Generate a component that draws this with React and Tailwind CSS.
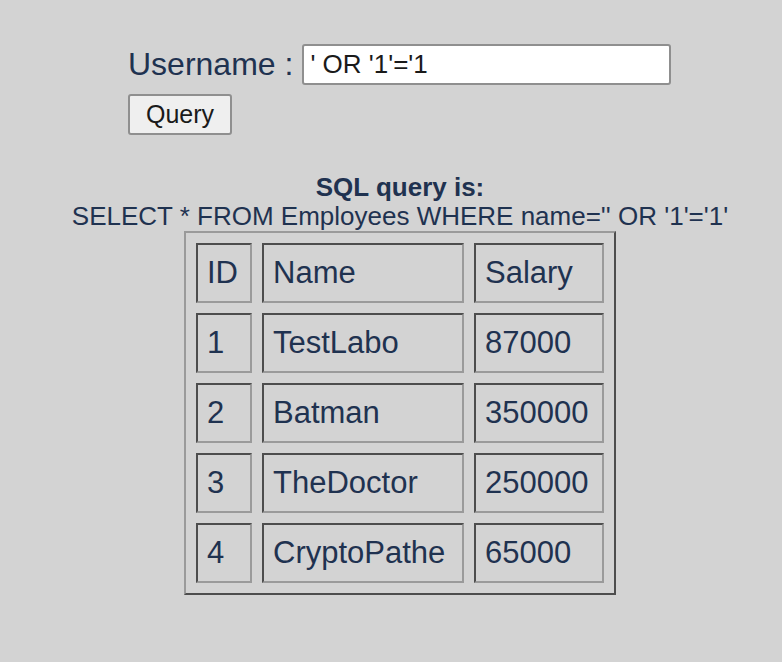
import React from 'react';

const rows = [
  { id: 1, name: 'TestLabo', salary: 87000 },
  { id: 2, name: 'Batman', salary: 350000 },
  { id: 3, name: 'TheDoctor', salary: 250000 },
  { id: 4, name: 'CryptoPathe', salary: 65000 },
];

const cell =
  'h-[60px] px-[9px] align-middle text-left border-2 border-t-[#4d4d4d] border-l-[#4d4d4d] border-b-[#9a9a9a] border-r-[#9a9a9a]';

const App = () => {
  return (
    <div className="min-h-screen w-full bg-[#d3d3d3] font-['Liberation_Sans',Arial,sans-serif] text-[#1f3250]">
      {/* Form */}
      <div className="pt-[44px] pl-[128px]">
        <div className="flex items-center h-[41px]">
          <label className="text-[32px] leading-[41px]">Username :</label>
          <input
            type="text"
            defaultValue="' OR '1'='1"
            className="ml-[9px] w-[369px] h-[41px] bg-white border-2 border-[#8f8f8f] rounded-[3px] px-[6px] text-[26px] text-[#1a1a1a] outline-none"
          />
        </div>
        <button className="mt-[9px] w-[104px] h-[41px] bg-[#efefef] border-2 border-[#8f8f8f] rounded-[3px] text-[25px] text-[#1a1a1a]">
          Query
        </button>
      </div>

      {/* Result */}
      <div className="pl-[18px] mt-[38px] flex flex-col items-center">
        <p className="text-[26px] leading-[29px] font-bold">SQL query is:</p>
        <p className="text-[26px] leading-[29px]">SELECT * FROM Employees WHERE name='' OR '1'='1'</p>
        <table className="border-separate border-spacing-[10px] border-2 border-t-[#9a9a9a] border-l-[#9a9a9a] border-b-[#4d4d4d] border-r-[#4d4d4d] text-[31px]">
          <tbody>
            <tr>
              <td className={`${cell} w-[56px]`}>ID</td>
              <td className={`${cell} w-[202px]`}>Name</td>
              <td className={`${cell} w-[130px]`}>Salary</td>
            </tr>
            {rows.map((r) => (
              <tr key={r.id}>
                <td className={cell}>{r.id}</td>
                <td className={cell}>{r.name}</td>
                <td className={cell}>{r.salary}</td>
              </tr>
            ))}
          </tbody>
        </table>
      </div>
    </div>
  );
};

export default App;
